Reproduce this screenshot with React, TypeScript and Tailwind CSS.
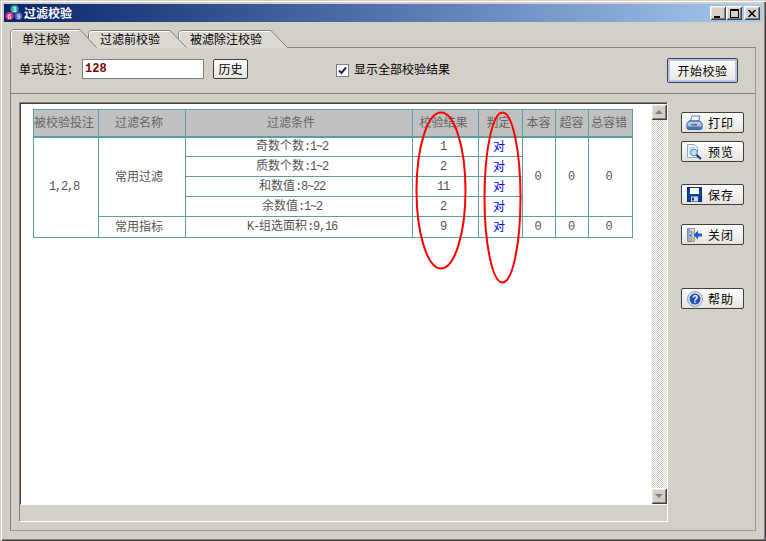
import React from "react";

const bevel = "shadow-[inset_1px_1px_0_#fff,inset_-1px_-1px_0_#404040,inset_2px_2px_0_#e8e6e0,inset_-2px_-2px_0_#808080]";

const M = ({ children }: { children: React.ReactNode }) => (
  <span className="font-['Liberation_Mono',monospace] tracking-[-1.2px]">{children}</span>
);

function Tab({ label, w, active, z }: { label: string; w: number; active?: boolean; z: string }) {
  const h = active ? 19 : 18;
  const d = `M0.5 ${h} V4 Q0.5 0.5 4 0.5 H${w - 17} L${w - 0.5} ${h - 0.5}`;
  return (
    <div className={`relative flex shrink-0 items-center ${z} ${active ? "h-[19px]" : "mt-px h-[18px]"}`} style={{ width: w }}>
      <svg className="absolute left-0 top-0" width={w} height={h}>
        <path d={`${d} V${h} H0.5 Z`} fill={active ? "#d4d0c8" : "#dcd9d2"} stroke="none" />
        <path d={d} fill="none" stroke="#808080" />
        <path d={`M1.5 ${h} V4 Q1.5 1.5 4 1.5 H${w - 18}`} fill="none" stroke="#fff" />
      </svg>
      <span className="relative pl-[12px] text-xs text-black">{label}</span>
    </div>
  );
}

function SideButton({ label, icon, mt }: { label: string; icon: React.ReactNode; mt: string }) {
  return (
    <button className={`flex h-[21px] w-[63px] items-center rounded-[2px] border border-[#404040] bg-gradient-to-b from-white to-[#e6e3db] pl-[4px] text-xs text-black ${mt}`}>
      <span className="flex h-4 w-[17px] shrink-0 items-center justify-center">{icon}</span>
      <span className="ml-[5px] tracking-[1px]">{label}</span>
    </button>
  );
}

const PrinterIcon = (
  <svg width="17" height="16" viewBox="0 0 17 16">
    <path d="M6 1h8l-1.500 5h-8z" fill="#f4f8fc" stroke="#5a7fb0" />
    <path d="M3 6h11l2 2.500V13q0 1.500-2 1.500H3q-2 0-2-1.500V8.500z" fill="#a9c8e8" stroke="#2f5f9e" />
    <path d="M1.500 11.500h14.500v2q0 1-2 1H3q-1.500 0-1.500-1z" fill="#3f76b8" />
    <rect x="5" y="9" width="3" height="1.500" fill="#17a84a" />
    <rect x="8" y="9" width="3" height="1.500" fill="#e61e1e" />
  </svg>
);
const PreviewIcon = (
  <svg width="17" height="16" viewBox="0 0 17 16">
    <path d="M1.500 0.500h7l3 3v10h-10z" fill="#f4f8fc" stroke="#8fa9c6" />
    <path d="M3 4h5M3 6h3M3 8h2M3 10h2" stroke="#a9bfd6" />
    <circle cx="8" cy="8.500" r="3.300" fill="#bfe0f8" stroke="#4d8cc4" />
    <path d="M10.500 11l4.500 4" stroke="#16357c" strokeWidth="2" />
  </svg>
);
const SaveIcon = (
  <svg width="15" height="15" viewBox="0 0 15 15">
    <rect x="0.500" y="0.500" width="14" height="14" fill="#0f3f9e" stroke="#0a2f80" />
    <rect x="3" y="1" width="9" height="6" fill="#fff" />
    <rect x="4" y="9.500" width="7" height="5" fill="#d5dcec" />
    <rect x="5" y="10.500" width="2" height="3" fill="#0f3f9e" />
  </svg>
);
const CloseIcon = (
  <svg width="17" height="16" viewBox="0 0 17 16">
    <path d="M1.500 1.500h7v13h-7z" fill="#e6e8ec" stroke="#8a94a8" />
    <path d="M2 2l4 2.500v9L2 15z" fill="#a8b8d4" stroke="#64769a" strokeWidth="0.600" />
    <path d="M6.500 4h2v3h-2zM6.500 10h2v4h-2z" fill="#e8b450" />
    <path d="M4 8h1v1H4z" fill="#223" />
    <path d="M16 6.500h-4V3.500L7.500 8l4.500 4.500V9.500h4z" fill="#0a62e0" />
  </svg>
);
const HelpIcon = (
  <svg width="16" height="16" viewBox="0 0 16 16">
    <circle cx="8" cy="8" r="7.500" fill="#dfe6f2" stroke="#8f9cb8" />
    <circle cx="8" cy="8" r="5.500" fill="#2150b8" />
    <text x="8" y="11.500" textAnchor="middle" fontSize="10" fontWeight="700" fill="#fff" fontFamily="Liberation Sans">?</text>
  </svg>
);

const Logo = (
  <svg width="18" height="18" viewBox="0 0 18 18">
    <circle cx="9.500" cy="5" r="4" fill="#2fa6a0" />
    <text x="9.500" y="7.500" textAnchor="middle" fontSize="7" fontWeight="700" fill="#bff" fontFamily="Liberation Sans">3</text>
    <circle cx="4.500" cy="12" r="4" fill="#d92d7f" />
    <text x="4.500" y="14.500" textAnchor="middle" fontSize="7" fontWeight="700" fill="#fdd" fontFamily="Liberation Sans">6</text>
    <circle cx="13.500" cy="12" r="4" fill="#4a55b0" />
    <text x="13.500" y="14.500" textAnchor="middle" fontSize="7" fontWeight="700" fill="#dde" fontFamily="Liberation Sans">9</text>
  </svg>
);

const cell = "border border-[#5f9ea0] px-0 pt-0 text-center align-middle font-normal text-xs leading-[14px]";
const Th = ({ children, pad }: { children: React.ReactNode; pad: string }) => (
  <th className={`${cell} border-b-2 bg-[#c0c0c0] pb-[2px] text-[#666] ${pad}`}>{children}</th>
);
const Td = ({ children, pad, rowSpan }: { children: React.ReactNode; pad: string; rowSpan?: number }) => (
  <td rowSpan={rowSpan} className={`${cell} pb-[2px] text-[#555] ${pad}`}>{children}</td>
);
const Right = () => <td className={`${cell} pb-[2px] pr-[3px] text-[#0000ff]`}>对</td>;

const rows: [string, string, string][] = [
  ["奇数个数", ":1~2", "1"],
  ["质数个数", ":1~2", "2"],
  ["和数值", ":8~22", "11"],
  ["余数值", ":1~2", "2"],
];

function CaptionButton({ children }: { children: React.ReactNode }) {
  return (
    <div className={`flex h-[14px] w-[16px] items-center justify-center bg-[#d4d0c8] ${bevel}`}>{children}</div>
  );
}

export default function App() {
  return (
    <div className="flex h-[541px] w-[766px] flex-col overflow-hidden bg-[#d4d0c8] px-[4px] pt-[4px] font-['Noto_Sans_CJK_SC','Liberation_Sans',sans-serif] shadow-[inset_1px_1px_0_#d4d0c8,inset_2px_2px_0_#fff,inset_-1px_-1px_0_#404040,inset_-2px_-2px_0_#808080]">
      {/* title bar */}
      <div className="flex h-[18px] shrink-0 items-center bg-gradient-to-r from-[#0a246a] to-[#a6caf0] pr-[2px]">
        <span className="flex w-[20px] shrink-0 items-center justify-center">{Logo}</span>
        <span className="text-xs font-bold text-white">过滤校验</span>
        <div className="ml-auto flex">
          <CaptionButton><span className="mt-[7px] mr-[2px] h-[2px] w-[6px] bg-black" /></CaptionButton>
          <CaptionButton><span className="h-[9px] w-[9px] border border-t-2 border-black" /></CaptionButton>
          <div className="ml-[2px]">
            <CaptionButton>
              <svg width="8" height="7" viewBox="0 0 8 7"><path d="M0.500 0l7 7M7.500 0l-7 7" stroke="#000" strokeWidth="1.500" /></svg>
            </CaptionButton>
          </div>
        </div>
      </div>

      {/* tabs */}
      <div className="mt-[7px] flex h-[19px] shrink-0 pl-[6px]">
        <Tab label="单注校验" w={87} active z="z-30" />
        <Tab label="过滤前校验" w={99} z="z-20 -ml-[9px]" />
        <Tab label="被滤除注校验" w={110} z="z-10 -ml-[9px]" />
      </div>

      {/* pane */}
      <div className="-mt-px mx-[6px] mb-[10px] flex min-h-0 flex-1 flex-col border border-[#808080] border-b-[#999] border-r-[#999]">
        <div className="flex h-[46px] shrink-0 items-center border-b border-[#808080] pb-[3px] pl-[8px]">
          <span className="text-xs text-black">单式投注：</span>
          <div className="ml-[3px] flex h-[20px] w-[122px] items-center border border-[#808080] bg-white pl-[2px] font-['Liberation_Mono',monospace] text-xs font-bold text-[#800000]">128</div>
          <button className="ml-[9px] flex h-[20px] w-[35px] items-center justify-center rounded-[2px] border border-[#404040] bg-gradient-to-b from-white to-[#e6e3db] text-xs text-black">历史</button>
          <span className="mt-[3px] ml-[88px] flex h-[13px] w-[13px] items-center justify-center border border-[#808080] bg-white">
            <svg width="9" height="9" viewBox="0 0 9 9"><path d="M1 4.500l2.500 2.500L8 1.500" fill="none" stroke="#14246e" strokeWidth="2" /></svg>
          </span>
          <span className="ml-[5px] text-xs text-black">显示全部校验结果</span>
          <button className="mt-[3px] ml-[217px] flex h-[25px] w-[71px] items-center justify-center rounded-[2px] border border-[#404040] bg-gradient-to-b from-white to-[#e6e3db] text-xs tracking-[0.5px] text-black shadow-[inset_0_0_0_2px_#b4c4f0]">开始校验</button>
        </div>

        <div className="flex min-h-0 flex-1 pl-[8px] pt-[8px] pb-[8px]">
          {/* framed panel */}
          <div className="flex w-[649px] shrink-0 flex-col border border-[#808080] border-b-white border-r-white">
            <div className="flex h-[402px] shrink-0 border-l border-t border-[#404040] border-b border-b-white">
              <div className="relative min-w-0 flex-1 bg-white pl-[12px] pt-[5px]">
                <table className="w-[599px] table-fixed border-collapse">
                  <colgroup>
                    <col className="w-[65px]" /><col className="w-[87px]" /><col className="w-[227px]" /><col className="w-[66px]" />
                    <col className="w-[44px]" /><col className="w-[33px]" /><col className="w-[33px]" /><col className="w-[44px]" />
                  </colgroup>
                  <thead>
                    <tr className="h-[27px]">
                      <Th pad="pr-[4px]">被校验投注</Th>
                      <Th pad="pr-[6px]">过滤名称</Th>
                      <Th pad="pr-[16px]">过滤条件</Th>
                      <Th pad="pr-[4px]">校验结果</Th>
                      <Th pad="pr-[4px]">判定</Th>
                      <Th pad="pr-[1px]">本容</Th>
                      <Th pad="pr-[1px]">超容</Th>
                      <Th pad="pr-[3px]">总容错</Th>
                    </tr>
                  </thead>
                  <tbody>
                    {rows.map(([name, val, res], i) => (
                      <tr key={name} className="h-[20px]">
                        {i === 0 && <Td rowSpan={5} pad="pr-[4px]"><M>1,2,8</M></Td>}
                        {i === 0 && <Td rowSpan={4} pad="pr-[6px]">常用过滤</Td>}
                        <Td pad="pr-[14px]">{name}<M>{val}</M></Td>
                        <Td pad="pr-[5px]"><M>{res}</M></Td>
                        <Right />
                        {i === 0 && <Td rowSpan={4} pad="pr-[3px]"><M>0</M></Td>}
                        {i === 0 && <Td rowSpan={4} pad="pr-[2px]"><M>0</M></Td>}
                        {i === 0 && <Td rowSpan={4} pad="pr-[4px]"><M>0</M></Td>}
                      </tr>
                    ))}
                    <tr className="h-[21px]">
                      <Td pad="pr-[6px]">常用指标</Td>
                      <Td pad="pr-[14px]"><M>K-</M>组选面积<M>:9,16</M></Td>
                      <Td pad="pr-[5px]"><M>9</M></Td>
                      <Right />
                      <Td pad="pr-[3px]"><M>0</M></Td>
                      <Td pad="pr-[2px]"><M>0</M></Td>
                      <Td pad="pr-[4px]"><M>0</M></Td>
                    </tr>
                  </tbody>
                </table>
                {/* hand-drawn red ellipses over the table */}
                <svg className="absolute left-0 top-0" width="629" height="190" viewBox="21 104 629 190">
                  <ellipse cx="441" cy="190.500" rx="24.500" ry="78" fill="none" stroke="#ff0000" strokeWidth="2" />
                  <ellipse cx="502.500" cy="197.500" rx="18" ry="85" fill="none" stroke="#ff0000" strokeWidth="2" />
                </svg>
              </div>
              {/* scrollbar */}
              <div className="flex w-[16px] shrink-0 flex-col justify-between bg-[repeating-conic-gradient(#d4d0c8_0_25%,#fff_0_50%)] bg-[length:2px_2px]">
                <div className={`flex h-[16px] items-center justify-center bg-[#d4d0c8] ${bevel}`}>
                  <span className="h-0 w-0 border-x-[4px] border-b-[4px] border-x-transparent border-b-[#808080]" />
                </div>
                <div className={`flex h-[16px] items-center justify-center bg-[#d4d0c8] ${bevel}`}>
                  <span className="h-0 w-0 border-x-[4px] border-t-[4px] border-x-transparent border-t-[#808080]" />
                </div>
              </div>
            </div>
            <div className="min-h-0 flex-1" />
          </div>

          {/* side buttons */}
          <div className="ml-[13px] flex flex-col">
            <SideButton label="打印" icon={PrinterIcon} mt="mt-[10px]" />
            <SideButton label="预览" icon={PreviewIcon} mt="mt-[8px]" />
            <SideButton label="保存" icon={SaveIcon} mt="mt-[22px]" />
            <SideButton label="关闭" icon={CloseIcon} mt="mt-[19px]" />
            <SideButton label="帮助" icon={HelpIcon} mt="mt-[43px]" />
          </div>
        </div>
      </div>
    </div>
  );
}
